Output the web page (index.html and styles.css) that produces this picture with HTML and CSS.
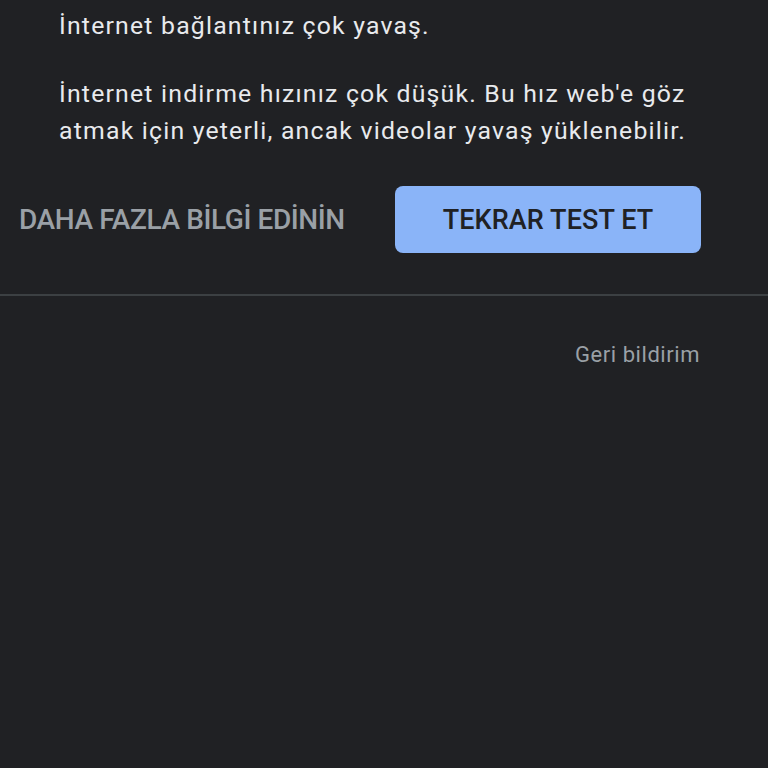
FILE: index.html
```html
<!DOCTYPE html>
<html lang="tr">
<head>
<meta charset="utf-8">
<link rel="stylesheet" href="styles.css">
</head>
<body>
<div class="page">
  <section class="result">
    <p class="msg title">İnternet bağlantınız çok yavaş.</p>
    <p class="msg">İnternet indirme hızınız çok düşük. Bu hız web'e göz atmak için yeterli, ancak videolar yavaş yüklenebilir.</p>
  </section>
  <div class="actions">
    <a class="link-btn">DAHA FAZLA BİLGİ EDİNİN</a>
    <button class="primary-btn">TEKRAR TEST ET</button>
  </div>
  <div class="divider"></div>
  <div class="feedback-row">
    <a class="feedback">Geri bildirim</a>
  </div>
</div>
</body>
</html>
```
FILE: styles.css
```css
html, body {
  margin: 0;
  padding: 0;
  background: #202124;
  height: 100%;
}
body {
  font-family: Roboto, "Noto Sans", sans-serif;
  color: #e8eaed;
}
.page {
  width: 768px;
  height: 768px;
  overflow: hidden;
}
.result {
  padding: 8px 58px 0 59px;
}
.msg {
  margin: 0;
  font-size: 24.8px;
  line-height: 37px;
  letter-spacing: 1.2px;
}
.title {
  line-height: 36px;
  margin-bottom: 31px;
}
.actions {
  display: flex;
  align-items: center;
  padding: 0 0 0 19px;
  margin-top: 37px;
}
.link-btn {
  font-size: 28px;
  font-weight: 500;
  color: #9aa0a6;
  letter-spacing: -0.4px;
  width: 376px;
}
.primary-btn {
  width: 306px;
  height: 67px;
  background: #8ab4f8;
  border: none;
  border-radius: 8px;
  color: #202124;
  font-family: Roboto, "Noto Sans", sans-serif;
  font-size: 27px;
  font-weight: 500;
  letter-spacing: 0.1px;
  padding: 0;
}
.divider {
  height: 2px;
  background: #3c4043;
  margin-top: 41px;
}
.feedback-row {
  display: flex;
  justify-content: flex-end;
  padding: 45px 68px 0 0;
}
.feedback {
  font-size: 22px;
  letter-spacing: 0.55px;
  color: #9aa0a6;
  line-height: 28px;
}
```
